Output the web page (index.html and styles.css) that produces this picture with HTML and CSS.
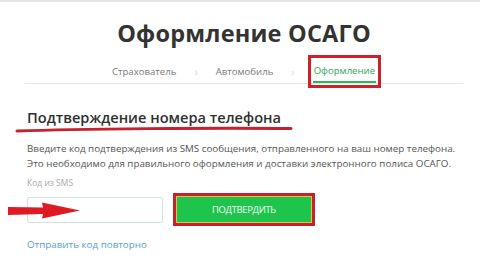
FILE: index.html
```html
<!DOCTYPE html>
<html lang="ru">
<head>
<meta charset="utf-8">
<link rel="stylesheet" href="styles.css">
</head>
<body>
<div class="topline"></div>
<div class="page">
  <h1 class="title">Оформление ОСАГО</h1>
  <nav class="steps">
    <span class="step">Страхователь</span>
    <span class="sep">›</span>
    <span class="step">Автомобиль</span>
    <span class="sep">›</span>
    <span class="step active">Оформление</span>
  </nav>
  <section class="confirm">
    <h2 class="heading">Подтверждение номера телефона</h2>
    <p class="text">Введите код подтверждения из SMS сообщения, отправленного на ваш номер телефона.<br>Это необходимо для правильного оформления и доставки электронного полиса ОСАГО.</p>
    <div class="label">Код из SMS</div>
    <div class="form-row">
      <div class="input"></div>
      <div class="btn-wrap"><button class="btn">ПОДТВЕРДИТЬ</button></div>
    </div>
    <a class="resend" href="#">Отправить код повторно</a>
  </section>
</div>
<svg class="underline-mark" width="280" height="8" viewBox="0 0 280 8"><path d="M2 6 C 60 4, 200 2.5, 276 3.5" stroke="#c8202c" stroke-width="3" fill="none" stroke-linecap="round"/></svg>
<svg class="arrow-mark" width="76" height="20" viewBox="0 0 76 20"><path d="M1 6 L36 6.5 L35 1.5 L73 9.5 L35 17.5 L36 13 L1 14 Z" fill="#e01a22"/></svg>
</body>
</html>
```
FILE: styles.css
```css
html, body { margin: 0; padding: 0; background: #fff; }
body { font-family: "Open Sans", "Noto Sans", sans-serif; width: 480px; height: 263px; overflow: hidden; position: relative; }
.topline { height: 2px; background: #e4e4e4; }
.page { margin-left: 25px; width: 438px; }
.title { margin: 0; padding-top: 17px; font-size: 23.5px; line-height: 28px; font-weight: 700; color: #333333; text-align: center; letter-spacing: 0.2px; }
.steps { margin-top: 12px; display: flex; justify-content: center; align-items: center; gap: 18px; border-bottom: 1px solid #e6e6e6; height: 25px; box-sizing: border-box; }
.step { font-size: 9.6px; color: #7a7a7a; line-height: 25px; height: 25px; box-sizing: border-box; }
.sep { font-size: 11px; color: #d8d8d8; line-height: 25px; }
.step.active { color: #34a853; position: relative; outline: 3px solid #d0212b; outline-offset: 2px; border-bottom: 2px solid #2fb85a; line-height: 21px; height: 23px; padding: 0 1px; }
.confirm { padding-left: 2px; }
.heading { margin: 23px 0 0; font-size: 14.6px; line-height: 20px; font-weight: 600; color: #2f2f2f; }
.text { margin: 14px 0 0; font-size: 9.8px; line-height: 15px; color: #555; white-space: nowrap; }
.label { margin-top: 6px; font-size: 8.5px; line-height: 12px; color: #aaa; }
.form-row { margin-top: 4px; display: flex; align-items: center; gap: 10px; }
.input { width: 136px; height: 26px; box-sizing: border-box; border: 1px solid #d3e4df; border-radius: 2px; }
.btn-wrap { border: 3px solid #c9202b; padding: 0; }
.btn { display: block; width: 136px; height: 27px; border: 1px solid #d9c64a; background: #1ec44c; color: #f2fff4; font-family: "Open Sans", sans-serif; font-size: 9.4px; font-weight: 400; letter-spacing: -0.3px; padding: 0; }
.resend { display: inline-block; margin-top: 12px; font-size: 9.8px; line-height: 14px; color: #5a9ed0; text-decoration: none; }
.underline-mark { position: absolute; left: 15px; top: 125px; }
.arrow-mark { position: absolute; left: 7px; top: 201px; }
```
